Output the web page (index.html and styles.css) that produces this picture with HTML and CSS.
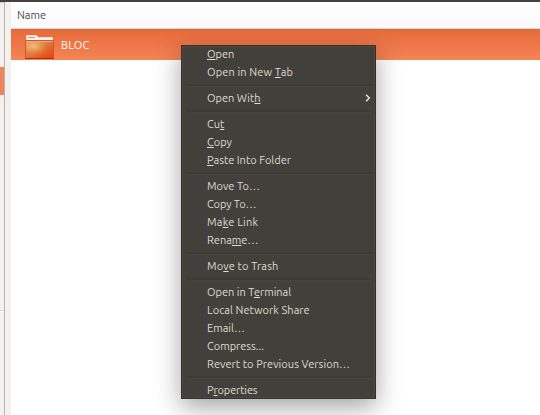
FILE: index.html
```
<!DOCTYPE html>
<html lang="en">
<head>
<meta charset="utf-8">
<title>Files</title>
<link rel="stylesheet" href="styles.css">
</head>
<body>
<div class="window">
  <div class="toolbar-edge"></div>
  <div class="panes">
    <aside class="sidebar"><div class="selected-place"></div><div class="place-divider"></div></aside>
    <div class="gutter"></div>
    <main class="files">
      <header class="column-head">Name</header>
      <div class="file-row">
        <svg class="folder" width="32" height="26" viewBox="0 0 32 26">
          <defs>
            <linearGradient id="front" x1="0" y1="0" x2="1" y2="1"><stop offset="0" stop-color="#e99a62"/><stop offset=".5" stop-color="#e07438"/><stop offset="1" stop-color="#e83c0c"/></linearGradient>
            <radialGradient id="shine" cx=".28" cy=".3" r=".55"><stop offset="0" stop-color="#f4cc90" stop-opacity=".8"/><stop offset="1" stop-color="#f0a050" stop-opacity="0"/></radialGradient>
          </defs>
          <path d="M2.5 7V1.5h10l2 2h14V7z" fill="#faf5f2" stroke="#ead8cf"/>
          <path d="M4 3.5h7" stroke="#e38b62"/>
          <path d="M1.5 6.5h28v18h-28z" fill="url(#front)" stroke="#c9592f"/>
          <path d="M2 7h27v17H2z" fill="url(#shine)"/>
          <path d="M2 7.5h27" stroke="#f0a87c"/>
          <path d="M1 24.5h29" stroke="#a8300f"/>
        </svg>
        <span>BLOC</span>
      </div>
    </main>
  </div>
</div>
<nav class="menu">
  <div class="item"><u>O</u>pen</div>
  <div class="item wide">Open in New <u>T</u>ab</div>
  <div class="separator"></div>
  <div class="item submenu">Open Wit<u>h</u><svg class="chevron" width="6" height="8" viewBox="0 0 6 8"><path d="M1 .8 4.3 4 1 7.2" fill="none" stroke="#dfdbd2" stroke-width="1.6"/></svg></div>
  <div class="separator"></div>
  <div class="item">Cu<u>t</u></div>
  <div class="item"><u>C</u>opy</div>
  <div class="item"><u>P</u>aste Into Folder</div>
  <div class="separator"></div>
  <div class="item">Move To…</div>
  <div class="item tight">Copy To…</div>
  <div class="item wider">Ma<u>k</u>e Link</div>
  <div class="item">Rena<u>m</u>e…</div>
  <div class="separator"></div>
  <div class="item wide">Mo<u>v</u>e to Trash</div>
  <div class="separator"></div>
  <div class="item">Open in T<u>e</u>rminal</div>
  <div class="item slightly-wide">Local Network Share</div>
  <div class="item">Email…</div>
  <div class="item">Compress...</div>
  <div class="item slightly-wide">Revert to Previous Version…</div>
  <div class="separator"></div>
  <div class="item tight">P<u>r</u>operties</div>
</nav>
</body>
</html>
```
FILE: styles.css
```
* { box-sizing: border-box; }
body { margin: 0; width: 540px; height: 415px; overflow: hidden; font: 11px/18px "Ubuntu", "Noto Sans", sans-serif; }
.window { height: 415px; display: flex; flex-direction: column; background: #fff; }
.toolbar-edge { height: 2px; background: #45423c; flex: none; }
.panes { flex: 1; display: flex; }
.sidebar { width: 5px; padding-top: 65px; background: #f2f1f0; border-right: 1px solid #b9b5ae; border-top: 1px solid #c9c5c0; }
.selected-place { height: 28px; margin-top: -1px; background: #f0845a; }
.place-divider { height: 2px; margin-top: 215px; background: #d9d6d2; border-bottom: 1px solid #fff; }
.gutter { width: 6px; background: #f2f1f0; }
.files { flex: 1; }
.column-head { height: 27px; padding: 4px 6px; color: #4c4c4c; background: linear-gradient(#fff, #f9f9f9); border-bottom: 1px solid #dcd6d2; }
.file-row { height: 31px; display: flex; align-items: center; gap: 5px; padding-left: 13px; color: #fff; background: linear-gradient(#e76b3b, #f58455); border-top: 1px solid #d9683d; letter-spacing: .25px; }
.folder { margin-top: 4px; }
.menu { position: absolute; left: 181px; top: 45px; width: 195px; height: 354px; background: #42403a; color: #dfdbd2; box-shadow: inset 0 0 0 1px #33312d, inset 0 0 0 2px #4a4842, 0 8px 24px rgba(0,0,0,.36); }
.item { height: 18px; padding-left: 26px; white-space: nowrap; }
.item u { text-decoration: underline 1px; text-underline-offset: 1px; text-decoration-skip-ink: none; }
.slightly-wide { letter-spacing: .06px; }
.wide { letter-spacing: .13px; }
.wider { letter-spacing: .22px; }
.tight { letter-spacing: -.12px; }
.submenu { display: flex; align-items: center; padding-right: 5px; }
.chevron { margin-left: auto; }
.separator { height: 8px; padding: 3px 5px; }
.separator::before { content: ""; display: block; height: 2px; background: #3d3b36; border-bottom: 1px solid #474540; }
```
